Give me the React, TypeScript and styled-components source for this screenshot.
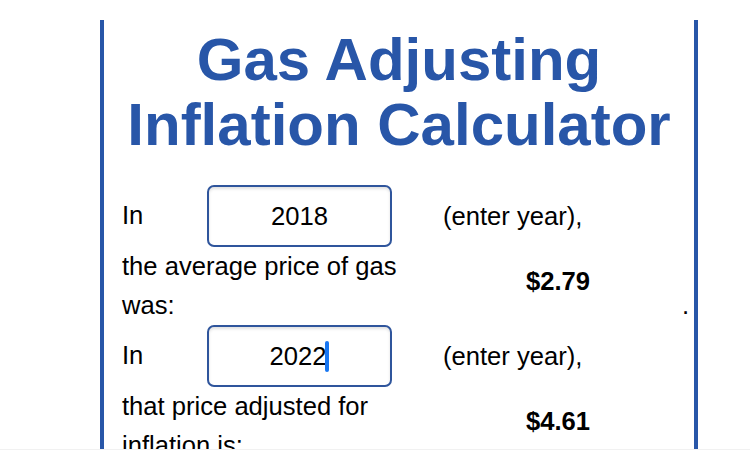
import React from 'react';
import styled, { createGlobalStyle } from 'styled-components';

const GlobalStyle = createGlobalStyle`
  html, body {
    margin: 0;
    padding: 0;
    background: #ffffff;
  }
  body {
    font-family: 'Liberation Sans', Arial, Helvetica, sans-serif;
    color: #000000;
  }
`;

const BLUE = '#2856a8';

const Viewport = styled.div`
  height: 449px;
  overflow: hidden;
  border-bottom: 1px solid #f1f1f1;
`;

const Panel = styled.section`
  margin: 20px 0 0 100px;
  width: 598px;
  min-height: 460px;
  box-sizing: border-box;
  border-left: 4px solid ${BLUE};
  border-right: 4px solid ${BLUE};
  padding: 7px 5px 0 18px;
`;

const Title = styled.h1`
  margin: 0 -5px 28px -18px;
  text-align: center;
  font-size: 60px;
  line-height: 65px;
  font-weight: 700;
  color: ${BLUE};
`;

const Form = styled.div`
  display: flex;
  flex-direction: column;
  font-size: 25.6px;
`;

const YearRow = styled.div`
  display: grid;
  grid-template-columns: 85px 185px 51px auto;
  align-items: center;
  height: 62px;
`;

const ResultRow = styled.div`
  display: grid;
  grid-template-columns: 290px 178px 1fr;
  align-items: center;
`;

const Label = styled.span`
  line-height: 1.15;
`;

const LongLabel = styled.span`
  line-height: 39px;
`;

const YearField = styled.div`
  height: 62px;
  box-sizing: border-box;
  border: 2px solid #2f559c;
  border-radius: 7px;
  box-shadow: inset 0 2px 3px rgba(0, 0, 0, 0.12);
  display: flex;
  align-items: center;
  justify-content: center;
  background: #ffffff;
`;

const Caret = styled.span`
  display: inline-block;
  width: 4px;
  height: 31px;
  margin-left: -1px;
  border-radius: 2px;
  background: #1877f2;
`;

const Hint = styled.span`
  grid-column: 4;
`;

const Value = styled.span`
  text-align: right;
  font-weight: 700;
  margin-bottom: 10px;
`;

const Period = styled.span`
  align-self: end;
  text-align: right;
  line-height: 39px;
`;

interface YearLineProps {
  year: string;
  focused?: boolean;
}

function YearLine({ year, focused }: YearLineProps) {
  return (
    <YearRow>
      <Label>In</Label>
      <YearField>
        <span>{year}</span>
        {focused && <Caret />}
      </YearField>
      <span />
      <Hint>(enter year),</Hint>
    </YearRow>
  );
}

export default function App() {
  return (
    <>
      <GlobalStyle />
      <Viewport>
        <Panel>
          <Title>
            Gas Adjusting
            <br />
            Inflation Calculator
          </Title>
          <Form>
            <YearLine year='2018' />
            <ResultRow>
              <LongLabel>the average price of gas was:</LongLabel>
              <Value>$2.79</Value>
              <Period>.</Period>
            </ResultRow>
            <YearLine year='2022' focused />
            <ResultRow>
              <LongLabel>that price adjusted for inflation is:</LongLabel>
              <Value>$4.61</Value>
              <Period />
            </ResultRow>
          </Form>
        </Panel>
      </Viewport>
    </>
  );
}
